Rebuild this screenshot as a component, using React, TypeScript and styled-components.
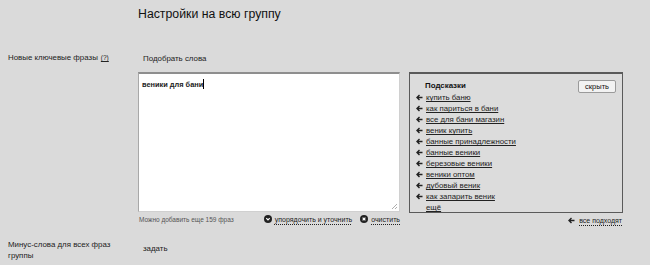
import React from 'react';
import styled, { createGlobalStyle } from 'styled-components';

const GlobalStyle = createGlobalStyle`
  html, body {
    margin: 0;
    padding: 0;
    background: #dadada;
    font-family: "Liberation Sans", Arial, sans-serif;
    color: #1a1a1a;
  }
`;

const Page = styled.div`
  width: 650px;
  height: 265px;
  overflow: hidden;
  display: grid;
  grid-template-columns: 138px 1fr;
`;

const Title = styled.h1`
  grid-column: 2;
  margin: 0;
  padding: 7px 0 0 0;
  height: 48px;
  box-sizing: border-box;
  font-size: 12.3px;
  line-height: 15px;
  font-weight: normal;
  color: #111;
`;

const Label = styled.div<{ $top?: number }>`
  grid-column: 1;
  padding: ${(p) => p.$top ?? 0}px 0 0 8px;
  font-size: 7.9px;
  line-height: 11px;
  color: #222;
`;

const Help = styled.span`
  font-size: 6.5px;
  margin-left: 3px;
  text-decoration: underline;
`;

const Content = styled.div`
  grid-column: 2;
  display: flex;
  flex-direction: column;
`;

const ActionLink = styled.div<{ $top?: number }>`
  padding: ${(p) => p.$top ?? 0}px 0 0 5px;
  font-size: 7.9px;
  line-height: 11px;
  color: #222;
`;

const EditorRow = styled.div`
  display: flex;
  gap: 9px;
  margin-top: 8px;
`;

const EditorColumn = styled.div`
  display: flex;
  flex-direction: column;
  width: 262px;
`;

const Editor = styled.div`
  position: relative;
  height: 140px;
  background: #fff;
  border-top: 2px solid #8e8e8e;
  border-left: 1px solid #a8a8a8;
  border-right: 1px solid #d0d0d0;
  border-bottom: 1px solid #d0d0d0;
  box-sizing: border-box;
  padding: 5px 3px;
  font-size: 7.4px;
  font-weight: bold;
  color: #222;
`;

const Caret = styled.span`
  display: inline-block;
  width: 1px;
  height: 10px;
  background: #000;
  vertical-align: -2px;
`;

const Grip = styled.svg`
  position: absolute;
  right: 1px;
  bottom: 1px;
`;

const EditorFooter = styled.div`
  display: flex;
  align-items: center;
  margin-top: 3px;
  font-size: 6.5px;
  color: #555;
`;

const Counter = styled.span`
  flex: 1;
  padding-left: 1px;
`;

const FooterLink = styled.a`
  display: flex;
  align-items: center;
  gap: 3px;
  margin-left: 8px;
  font-size: 7px;
  color: #222;
  text-decoration: underline;
  text-decoration-style: dotted;
  text-underline-offset: 2px;
`;

const HintsColumn = styled.div`
  display: flex;
  flex-direction: column;
  width: 214px;
`;

const Hints = styled.div`
  height: 141px;
  box-sizing: border-box;
  border: 1px solid #5a5a5a;
  border-top-width: 2px;
  background: #dcdcdc;
  padding: 5px 6px 0 6px;
`;

const HintsHead = styled.div`
  display: flex;
  align-items: center;
  justify-content: space-between;
  height: 13px;
  padding-left: 9px;
`;

const HintsTitle = styled.span`
  font-size: 7.9px;
  font-weight: bold;
  color: #111;
`;

const HideButton = styled.button`
  font-family: inherit;
  font-size: 7.5px;
  padding: 1px 6px;
  margin-top: 2px;
  background: #f2f2f2;
  border: 1px solid #9a9a9a;
  border-radius: 2px;
  color: #111;
`;

const HintItem = styled.div`
  display: flex;
  align-items: center;
  gap: 3px;
  height: 11px;
  font-size: 7.8px;
  color: #222;
`;

const HintText = styled.span<{ $indent?: boolean }>`
  text-decoration: underline;
  margin-left: ${(p) => (p.$indent ? '10px' : '0')};
`;

const AllFit = styled.div`
  display: flex;
  justify-content: flex-end;
  align-items: center;
  gap: 4px;
  margin-top: 4px;
  padding-right: 1px;
  font-size: 7px;
  color: #222;
`;

const Dotted = styled.span`
  text-decoration: underline;
  text-decoration-style: dotted;
  text-underline-offset: 2px;
`;

const Arrow = () => (
  <svg width="7" height="7" viewBox="0 0 7 7">
    <path d="M6.5 3.5H1.5M3.5 1L1 3.5L3.5 6" stroke="#222" strokeWidth="1.4" fill="none" />
  </svg>
);

const hints = [
  'купить баню',
  'как париться в бани',
  'все для бани магазин',
  'веник купить',
  'банные принадлежности',
  'банные веники',
  'березовые веники',
  'веники оптом',
  'дубовый веник',
  'как запарить веник',
];

export default function App() {
  return (
    <>
      <GlobalStyle />
      <Page>
        <Title>Настройки на всю группу</Title>

        <Label $top={0}>
          Новые ключевые фразы<Help>(?)</Help>
        </Label>
        <Content>
          <ActionLink $top={1}>Подобрать слова</ActionLink>
          <EditorRow>
            <EditorColumn>
              <Editor>
                веники для бани<Caret />
                <Grip width="7" height="7" viewBox="0 0 7 7">
                  <path d="M6 1L1 6M6 4L4 6" stroke="#999" strokeWidth="0.8" />
                </Grip>
              </Editor>
              <EditorFooter>
                <Counter>Можно добавить еще 159 фраз</Counter>
                <FooterLink>
                  <svg width="8" height="8" viewBox="0 0 8 8">
                    <circle cx="4" cy="4" r="4" fill="#222" />
                    <path d="M2.3 3.2L4 5L5.7 3.2" stroke="#fff" strokeWidth="1.2" fill="none" />
                  </svg>
                  упорядочить и уточнить
                </FooterLink>
                <FooterLink>
                  <svg width="8" height="8" viewBox="0 0 8 8">
                    <circle cx="4" cy="4" r="4" fill="#222" />
                    <path d="M2.6 2.6L5.4 5.4M5.4 2.6L2.6 5.4" stroke="#fff" strokeWidth="1.2" />
                  </svg>
                  очистить
                </FooterLink>
              </EditorFooter>
            </EditorColumn>
            <HintsColumn>
              <Hints>
                <HintsHead>
                  <HintsTitle>Подсказки</HintsTitle>
                  <HideButton>скрыть</HideButton>
                </HintsHead>
                {hints.map((h) => (
                  <HintItem key={h}>
                    <Arrow />
                    <HintText>{h}</HintText>
                  </HintItem>
                ))}
                <HintItem>
                  <HintText $indent>ещё</HintText>
                </HintItem>
              </Hints>
              <AllFit>
                <Arrow />
                <Dotted>все подходят</Dotted>
              </AllFit>
            </HintsColumn>
          </EditorRow>
        </Content>

        <Label $top={10}>
          Минус-слова для всех фраз
          <br />
          группы
        </Label>
        <Content>
          <ActionLink $top={14}>задать</ActionLink>
        </Content>
      </Page>
    </>
  );
}
